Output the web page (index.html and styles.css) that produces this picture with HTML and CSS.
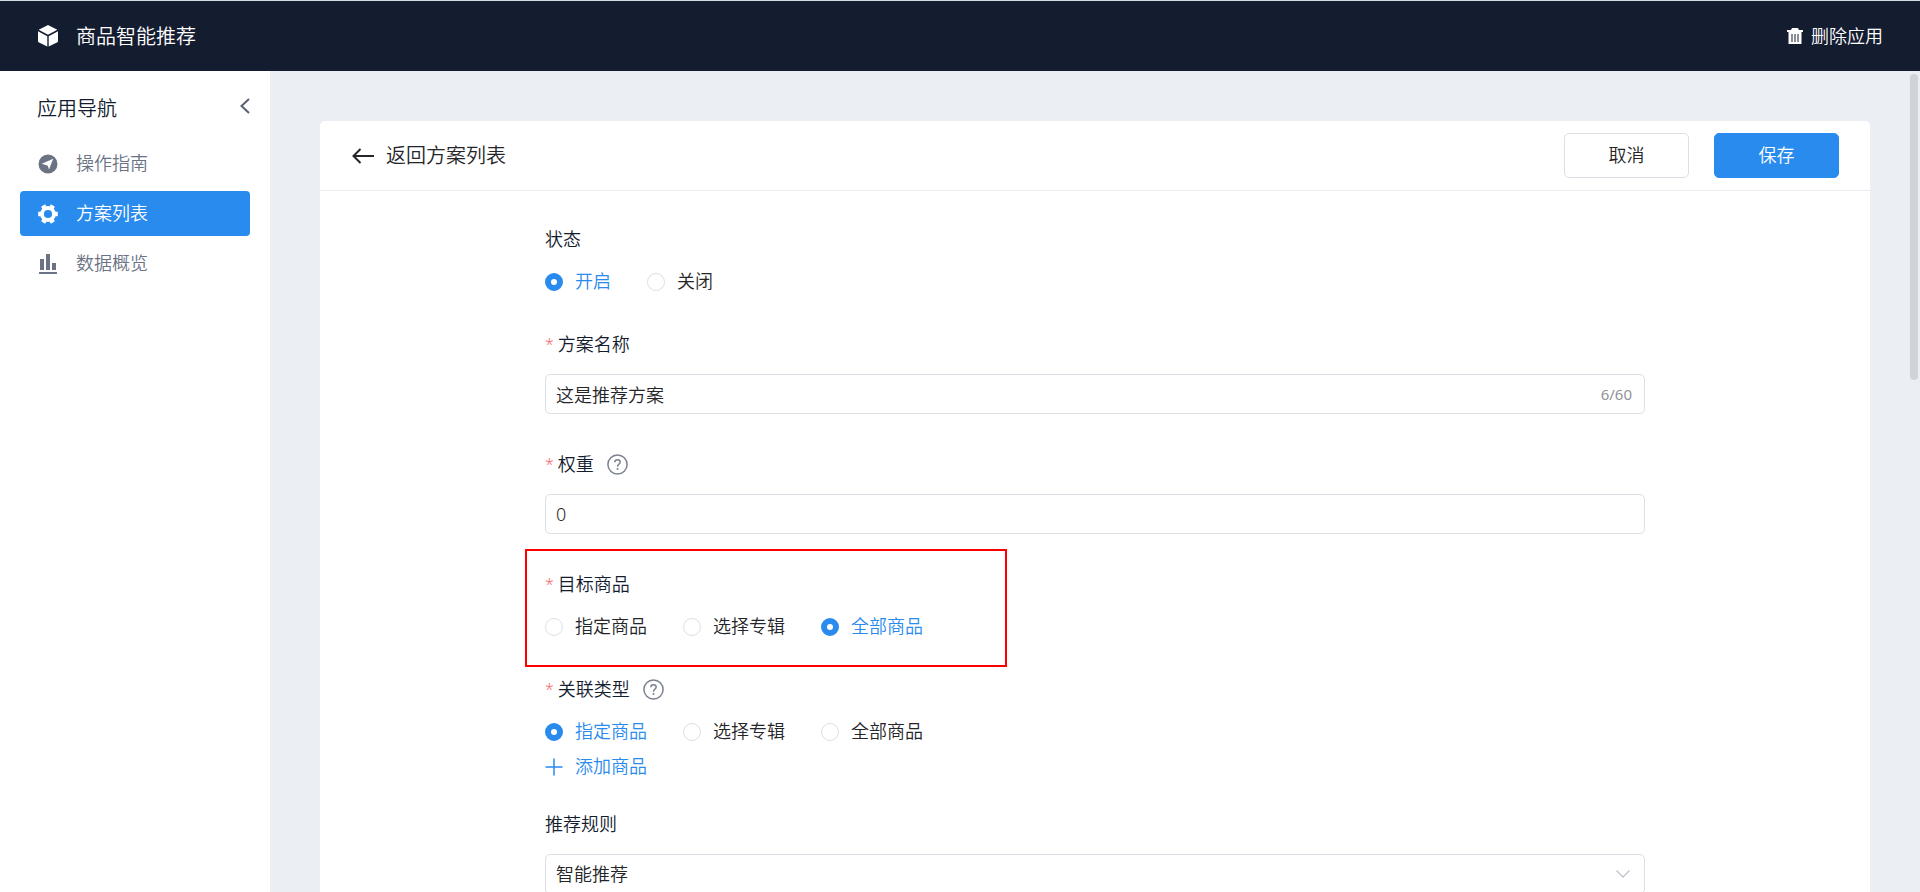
FILE: index.html
```html
<!DOCTYPE html>
<html lang="zh-CN">
<head>
<meta charset="utf-8">
<title>商品智能推荐</title>
<link rel="stylesheet" href="styles.css">
</head>
<body>
<header class="topbar">
  <div class="brand">
    <svg class="icon" viewBox="0 0 20 22" aria-hidden="true"><path d="M10 0 L19.300 4.700 L10 9.800 L0.700 4.700Z M0 6.200 L9.300 11.300 V21.500 L1 17.500 Q0 17 0 16Z M20 6.200 L10.700 11.300 V21.500 L19 17.500 Q20 17 20 16Z" fill="currentColor"/></svg>
    <span>商品智能推荐</span>
  </div>
  <button class="remove" type="button">
    <svg viewBox="0 0 16 16" aria-hidden="true"><path fill="currentColor" fill-rule="evenodd" d="M5 0h6l1 2h4v2h-1.500v12h-13V4H0V2h4zM4.500 6v8h1V6zM7.500 6v8h1V6zM10.500 6v8h1V6z"/></svg>
    <span>删除应用</span>
  </button>
</header>
<div class="body">
  <nav class="sidebar" aria-label="应用导航">
    <div class="sidebar-head">
      <h2>应用导航</h2>
      <button class="collapse" type="button" aria-label="收起"><svg viewBox="0 0 10 16"><path d="M9 1 L1.500 8 L9 15" fill="none" stroke="currentColor" stroke-width="2"/></svg></button>
    </div>
    <a class="nav-item" href="#">
      <svg class="icon" viewBox="0 0 20 20" aria-hidden="true"><path fill="currentColor" fill-rule="evenodd" d="M10 0.500a9.500 9.500 0 1 0 0 19a9.500 9.500 0 1 0 0-19zM15.200 4.800L11 15.600L9.800 11.700L3.800 9.700z"/></svg>
      <span>操作指南</span>
    </a>
    <a class="nav-item active" href="#" aria-current="page">
      <svg class="icon" viewBox="0 0 20 20" aria-hidden="true"><g fill="none" stroke="currentColor"><circle cx="10" cy="10" r="6" stroke-width="3.800"/><path id="teeth" stroke-width="4.600" d="M0.200 10H4M16 10H19.800"/><path stroke-width="4.600" d="M0.200 10H4M16 10H19.800" transform="rotate(60 10 10)"/><path stroke-width="4.600" d="M0.200 10H4M16 10H19.800" transform="rotate(120 10 10)"/></g></svg>
      <span>方案列表</span>
    </a>
    <a class="nav-item" href="#">
      <svg class="icon" viewBox="0 0 20 20" aria-hidden="true"><path fill="currentColor" d="M2 5h4v11H2zM8 0h4v16H8zM14 9h4v7h-4zM1 18h18v2H1z"/></svg>
      <span>数据概览</span>
    </a>
  </nav>
  <main class="main">
    <section class="card">
      <div class="card-head">
        <a class="back" href="#">
          <svg viewBox="0 0 22 16" aria-hidden="true"><path d="M8.500 1 L1.500 8 L8.500 15 M1.500 8 H22" fill="none" stroke="currentColor" stroke-width="2"/></svg>
          <span>返回方案列表</span>
        </a>
        <div class="actions">
          <button class="btn" type="button">取消</button>
          <button class="btn primary" type="submit" form="plan">保存</button>
        </div>
      </div>
      <form class="form" id="plan">
        <fieldset class="field">
          <legend class="label">状态</legend>
          <div class="radios">
            <label><input type="radio" name="status" checked><span>开启</span></label>
            <label><input type="radio" name="status"><span>关闭</span></label>
          </div>
        </fieldset>
        <div class="field">
          <label class="label required" for="name">方案名称</label>
          <div class="control">
            <input id="name" type="text" value="这是推荐方案" maxlength="60">
            <span class="count">6/60</span>
          </div>
        </div>
        <div class="field">
          <div class="label">
            <label class="required" for="weight">权重</label>
            <svg class="help" viewBox="0 0 21 21" aria-hidden="true"><circle cx="10.500" cy="10.500" r="9.600" fill="none" stroke="currentColor" stroke-width="1.500"/><path d="M7.800 8.300 Q7.800 5.700 10.500 5.700 Q13.200 5.700 13.200 8 Q13.200 9.300 11.700 10.300 Q10.500 11.100 10.500 12.700" fill="none" stroke="currentColor" stroke-width="1.500"/><circle cx="10.500" cy="15" r="1" fill="currentColor"/></svg>
          </div>
          <div class="control"><input id="weight" type="text" value="0"></div>
        </div>
        <div class="highlight">
          <fieldset class="field">
            <legend class="label required">目标商品</legend>
            <div class="radios">
              <label><input type="radio" name="target"><span>指定商品</span></label>
              <label><input type="radio" name="target"><span>选择专辑</span></label>
              <label><input type="radio" name="target" checked><span>全部商品</span></label>
            </div>
          </fieldset>
        </div>
        <fieldset class="field compact">
          <legend class="label"><span class="required">关联类型</span>
            <svg class="help" viewBox="0 0 21 21" aria-hidden="true"><circle cx="10.500" cy="10.500" r="9.600" fill="none" stroke="currentColor" stroke-width="1.500"/><path d="M7.800 8.300 Q7.800 5.700 10.500 5.700 Q13.200 5.700 13.200 8 Q13.200 9.300 11.700 10.300 Q10.500 11.100 10.500 12.700" fill="none" stroke="currentColor" stroke-width="1.500"/><circle cx="10.500" cy="15" r="1" fill="currentColor"/></svg>
          </legend>
          <div class="radios">
            <label><input type="radio" name="relation" checked><span>指定商品</span></label>
            <label><input type="radio" name="relation"><span>选择专辑</span></label>
            <label><input type="radio" name="relation"><span>全部商品</span></label>
          </div>
          <button class="add" type="button">
            <svg viewBox="0 0 18 18" aria-hidden="true"><path d="M9 0.500V17.500M0.500 9H17.500" stroke="currentColor" stroke-width="1.500"/></svg>
            <span>添加商品</span>
          </button>
        </fieldset>
        <div class="field">
          <label class="label" for="rule">推荐规则</label>
          <div class="control">
            <select id="rule"><option>智能推荐</option></select>
            <svg class="caret" viewBox="0 0 14 8" aria-hidden="true"><path d="M0.500 0.500 L7 7 L13.500 0.500" fill="none" stroke="currentColor" stroke-width="1.300"/></svg>
          </div>
        </div>
      </form>
    </section>
    <div class="scroll-thumb"></div>
  </main>
</div>
</body>
</html>
```
FILE: styles.css
```css
*,
*::before,
*::after {
  box-sizing: border-box;
}

body {
  margin: 0;
  height: 100vh;
  display: flex;
  flex-direction: column;
  overflow: hidden;
  background: #fff;
  color: #242528;
  font: 350 18px/25px "Noto Sans", "Noto Sans CJK SC", sans-serif;
}

button,
input,
select {
  font: inherit;
  color: inherit;
}

a {
  color: inherit;
  text-decoration: none;
}

svg {
  display: block;
  flex: none;
}

.icon {
  width: 20px;
  height: 20px;
}

.topbar {
  flex: none;
  height: 71px;
  padding: 0 37px 0 38px;
  display: flex;
  align-items: center;
  justify-content: space-between;
  border-top: 1px solid #d5dadd;
  background: #141c30;
  color: #fff;
}

.brand {
  display: flex;
  align-items: center;
  gap: 18px;
  font-size: 20px;
}

.brand .icon {
  height: 22px;
}

.remove {
  display: flex;
  align-items: center;
  gap: 8px;
  padding: 0;
  border: 0;
  background: none;
}

.remove svg {
  width: 16px;
  height: 16px;
}

.body {
  flex: 1;
  min-height: 0;
  display: flex;
}

.sidebar {
  flex: none;
  width: 270px;
  padding: 20px;
  display: flex;
  flex-direction: column;
  gap: 5px;
}

.sidebar-head {
  height: 45px;
  padding-left: 17px;
  display: flex;
  justify-content: space-between;
}

.sidebar-head h2 {
  margin: 0;
  color: #141c30;
  font-size: 20px;
  line-height: 36px;
  font-weight: inherit;
}

.collapse {
  height: 30px;
  padding: 0;
  border: 0;
  background: none;
  color: #5a6072;
}

.collapse svg {
  width: 10px;
  height: 16px;
}

.nav-item {
  height: 45px;
  padding: 0 18px;
  display: flex;
  align-items: center;
  gap: 18px;
  border-radius: 4px;
  color: #6b7385;
}

.nav-item.active {
  background: #298bee;
  color: #fff;
}

.main {
  position: relative;
  flex: 1;
  min-width: 0;
  padding: 50px 50px 0;
  overflow: hidden;
  background: #ebeef3;
}

.card {
  border-radius: 5px;
  background: #fff;
}

.card-head {
  height: 70px;
  padding: 0 31px 0 32px;
  display: flex;
  align-items: center;
  justify-content: space-between;
  border-bottom: 1px solid #ebedf0;
}

.back {
  display: flex;
  align-items: center;
  gap: 12px;
  font-size: 20px;
}

.back svg {
  width: 22px;
  height: 16px;
}

.actions {
  display: flex;
  gap: 25px;
}

.btn {
  width: 125px;
  height: 45px;
  padding: 0;
  border: 1px solid #dcdfe6;
  border-radius: 5px;
  background: #fff;
}

.btn.primary {
  border-color: #298bee;
  background: #298bee;
  color: #fff;
}

.form {
  max-width: 1100px;
  margin: 0 auto;
  padding: 33px 0 50px;
}

.field {
  margin: 0 0 35px;
  padding: 0;
  border: 0;
}

.field.compact {
  margin-bottom: 30px;
}

.label {
  display: flex;
  align-items: center;
  gap: 13px;
  height: 30px;
  margin-bottom: 15px;
  padding: 0;
  color: #141c30;
}

.required,
.label.required {
  gap: 4px;
}

.required {
  display: flex;
}

.required::before {
  content: "*";
  color: #f56c6c;
  font-size: 16px;
}

.help {
  width: 21px;
  height: 21px;
  color: #7b8190;
}

.control {
  height: 40px;
  display: flex;
  align-items: center;
  border: 1px solid #dcdfe6;
  border-radius: 5px;
  background: #fff;
}

.control input,
.control select {
  flex: 1;
  min-width: 0;
  height: 38px;
  padding: 0 10px;
  border: 0;
  background: none;
  appearance: none;
  outline: none;
}

.count {
  padding-right: 12px;
  color: #909399;
  font-size: 15px;
  font-weight: 400;
}

.caret {
  width: 14px;
  height: 8px;
  margin-right: 14px;
  color: #c0c4cc;
}

.radios {
  display: flex;
  gap: 36px;
}

.radios label {
  display: flex;
  align-items: center;
  gap: 12px;
}

.radios input {
  width: 18px;
  height: 18px;
  margin: 0;
  border: 1px solid #dcdfe6;
  border-radius: 50%;
  background: #fff;
  appearance: none;
}

.radios input:checked {
  border: 6px solid #298bee;
}

.radios input:checked + span {
  color: #298bee;
}

.highlight {
  position: relative;
}

.highlight::after {
  content: "";
  position: absolute;
  top: -20px;
  left: -20px;
  width: 482px;
  height: 118px;
  border: 2px solid #f00;
  pointer-events: none;
}

.add {
  display: flex;
  align-items: center;
  gap: 12px;
  margin-top: 10px;
  padding: 0;
  border: 0;
  background: none;
  color: #298bee;
}

.add svg {
  width: 18px;
  height: 18px;
}

.scroll-thumb {
  position: absolute;
  top: 3px;
  right: 2px;
  width: 8px;
  height: 306px;
  border-radius: 4px;
  background: #d0d3d8;
}
```
